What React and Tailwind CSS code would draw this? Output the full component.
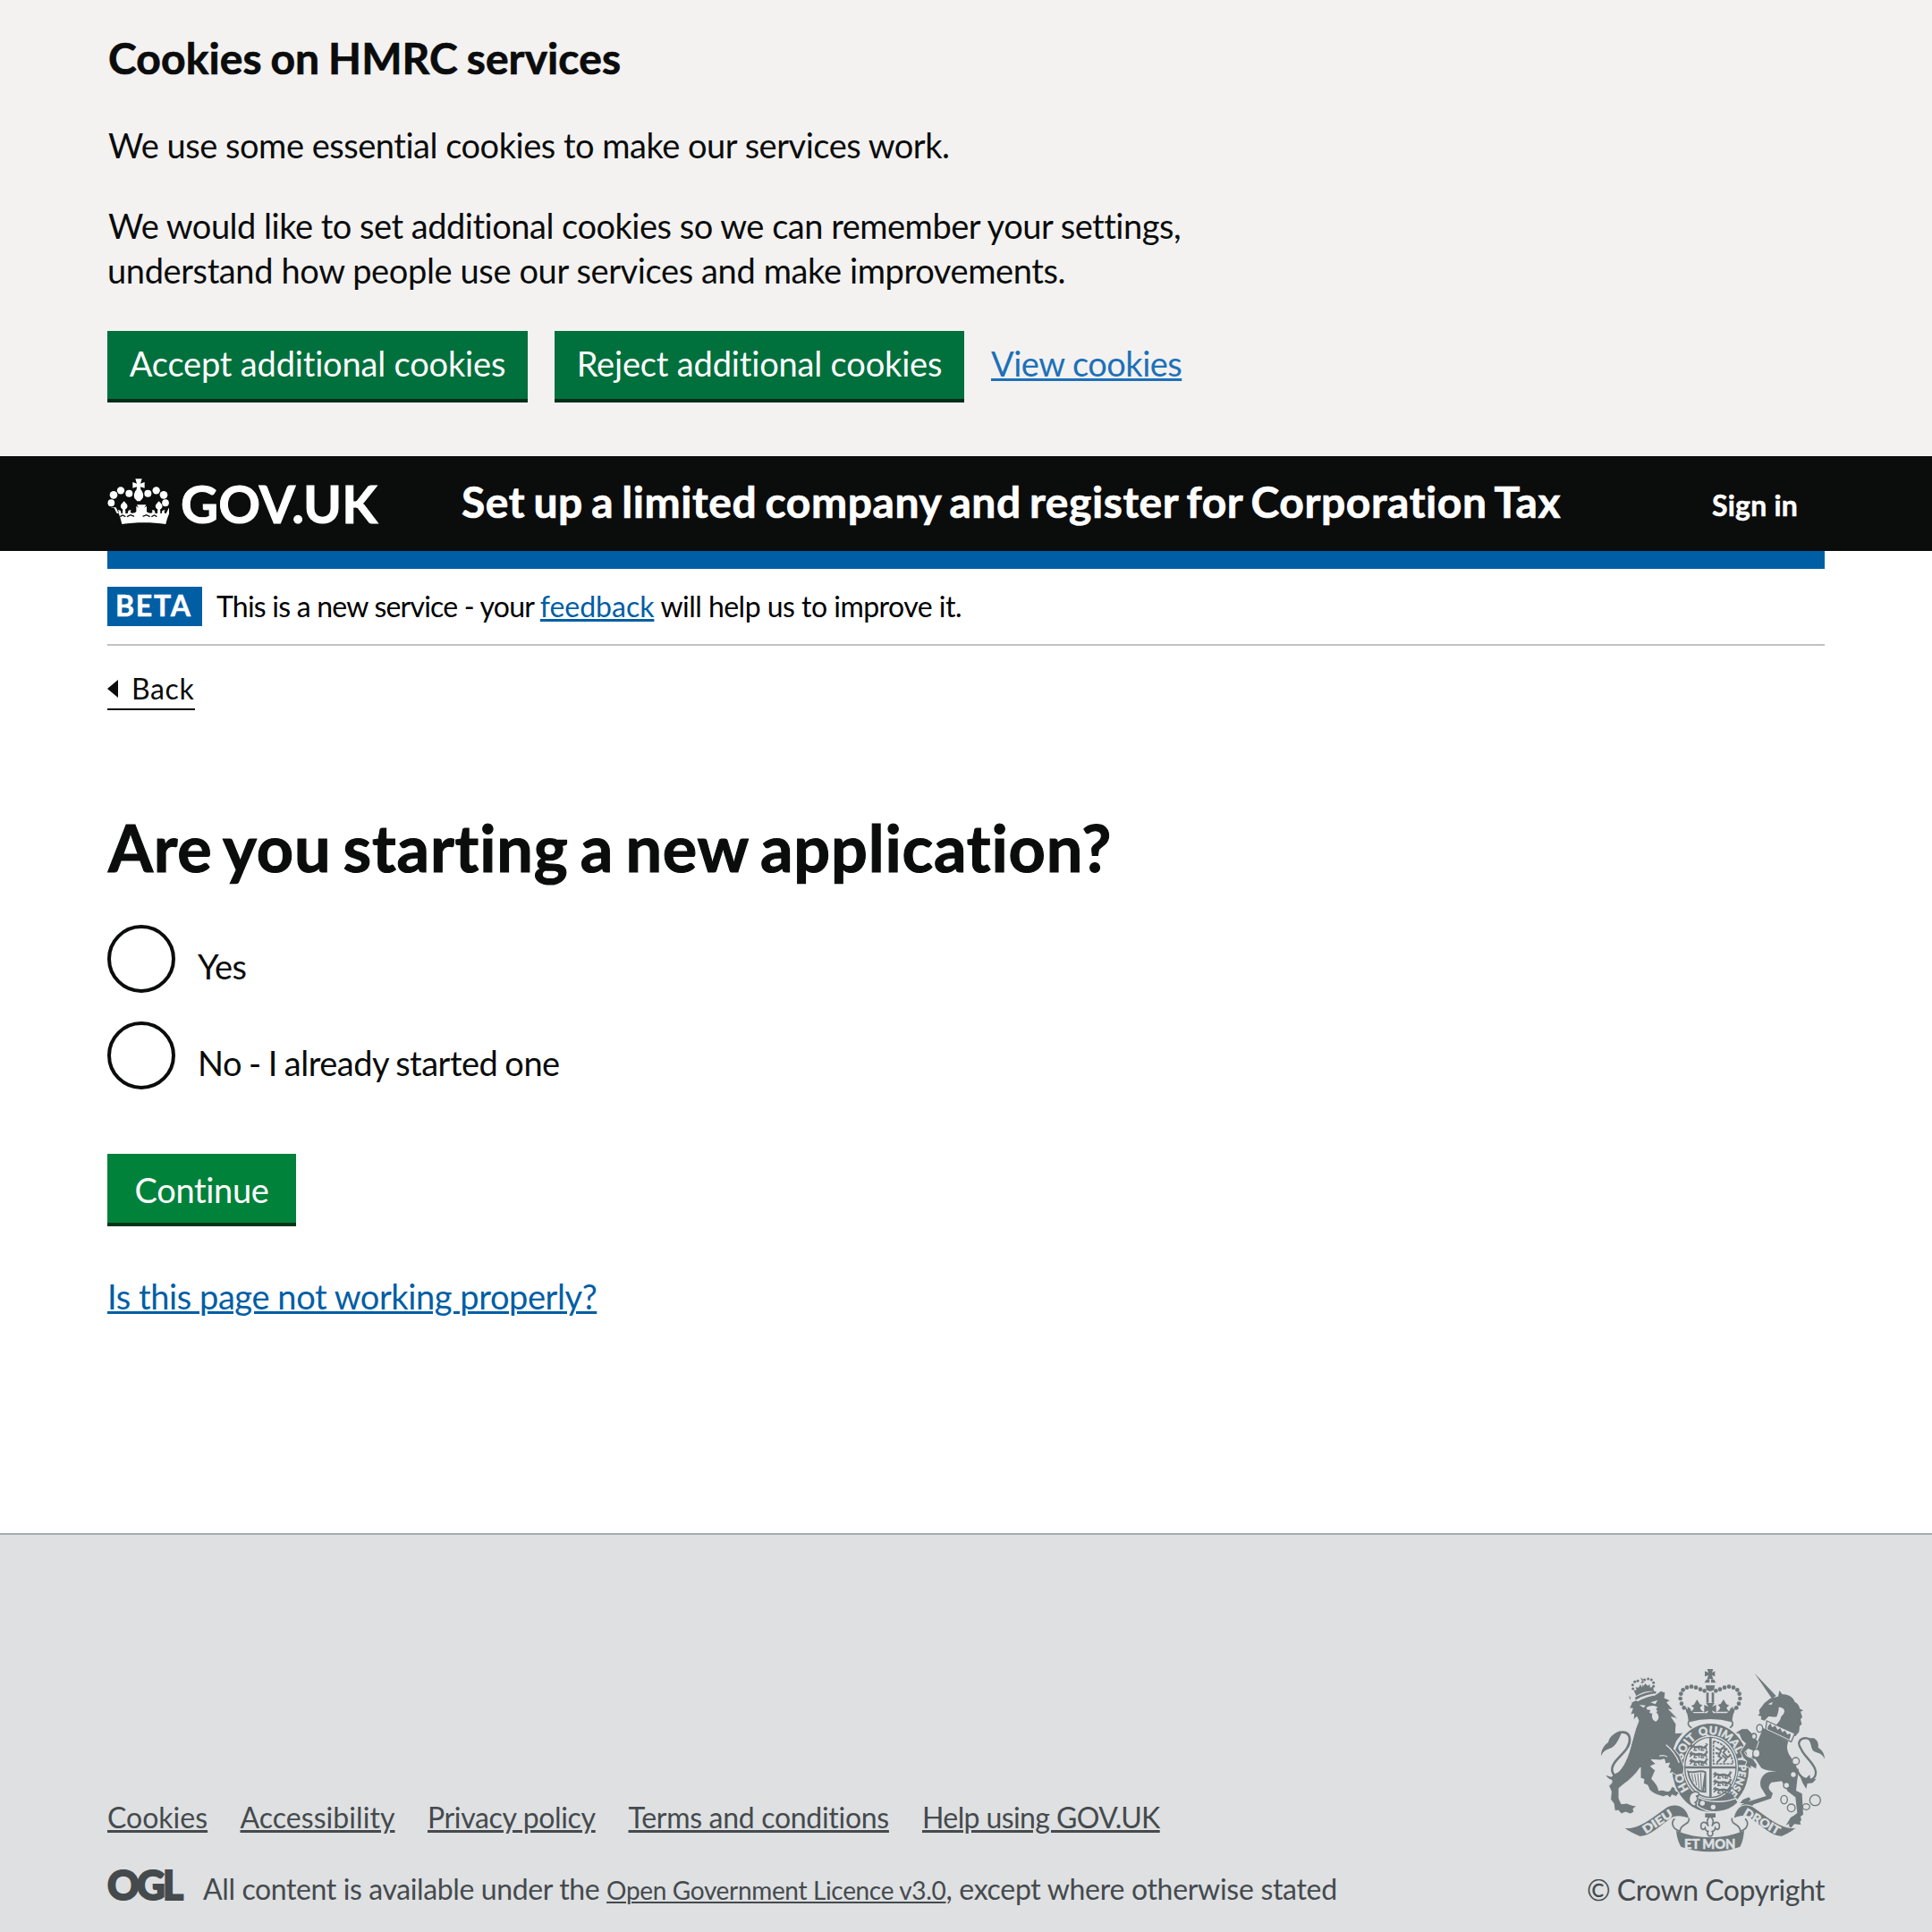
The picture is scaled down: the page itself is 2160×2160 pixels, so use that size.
import React from "react";

function HeaderCrown() {
  return (
    <svg viewBox="12 15 207 156" className="block h-[52px] w-[69px] shrink-0" fill="#fff" aria-hidden="true">
      <ellipse cx="25" cy="97" rx="11.5" ry="12" />
      <circle cx="33" cy="70" r="13" />
      <circle cx="57" cy="55" r="12.5" />
      <circle cx="85" cy="65" r="12" />
      <circle cx="148" cy="65" r="12" />
      <circle cx="176" cy="55" r="12.5" />
      <circle cx="201" cy="70" r="13" />
      <ellipse cx="207" cy="97" rx="11.5" ry="12" />
      <path d="M106 16h22l-5 16 14-5v20l-14-4 1 9c11 12 11 29 2 34l-4 5h-10l-4-5c-9-5-9-22 2-34l1-9-14 4v-20l14 5z" />
      <path d="M23 112l12 2 9 18c8 0 7-7 3-11 8-2 12 4 11 10l5 2c0-5 0-10 1-14-8-6-10-12-4-19l8-9 8 9c6 7 4 13-4 19 1 4 1 9 1 14l8-2c-1-8 4-13 11-9-4 4-3 9 3 9 8 0 10-2 14-5v-19l8 6-6-10h31l-6 10 8-6v19c4 3 6 5 14 5 6 0 7-5 3-9 7-4 12 1 11 9l8 2c0-5 0-10 1-14-8-6-10-12-4-19l8-9 8 9c6 7 4 13-4 19 1 4 1 9 1 14l5-2c-1-6 3-12 11-10-4 4-5 11 3 11l9-18 12-2c-12 20-18 38-22 56-46-7-101-7-147 0-4-18-10-36-20-56z" />
      <path d="M55 143l8-5 10 5M78 143l12-6 12 5M160 143l10-5 8 5M131 142l12-5 12 6" fill="none" stroke="#0b0c0c" strokeWidth="4" />
    </svg>
  );
}

const FILL = "#6f787b";
const PAPER = "#dee0e2";

const leftArch = [
  [352, 189], [338, 178], [330, 164], [326, 147], [328, 131], [335, 118], [348, 110], [363, 107], [378, 110], [393, 116], [407, 121],
];

const lionCrownPearls = [
  [167, 114], [166, 101], [173, 91], [183, 88], [206, 84], [218, 81], [229, 84], [236, 94], [236, 106],
];

function QuarterLions({ x, y }) {
  return (
    <g transform={`translate(${x} ${y})`} fill="none" stroke={FILL} strokeLinecap="round" strokeLinejoin="round">
      {[0, 25, 50].map((dy) => (
        <g key={dy} transform={`translate(0 ${dy})`}>
          <path strokeWidth="8" d="M8 8c5-5 9 2 15 2s13-4 20 0 11 1 13-3" />
          <path strokeWidth="4.5" d="M11 10l-7 6M20 12l-3 8h8M31 11l4 8M44 11l-3 9h8M54 10l5 8M3 7l5-6M56 7l6-6-5-2" />
        </g>
      ))}
    </g>
  );
}

function RoyalArms() {
  return (
    <svg viewBox="60 45 750 618" className="block h-[206px] w-[250px]" fill={FILL} aria-hidden="true">
      <defs>
        <path id="garter" d="M427 489A95 111 0 0 1 427 267A95 111 0 0 1 427 489" />
      </defs>

      {/* central crown */}
      {leftArch.map(([x, y]) => (
        <circle key={`l${x}`} cx={x} cy={y} r="7" />
      ))}
      {leftArch.map(([x, y]) => (
        <circle key={`r${x}`} cx={852 - x} cy={y} r="7" />
      ))}
      <path d="M416 48h20l-4 12 10-5v18l-10-4 4 12h-20l4-12-12 4V55l12 5zM424 80h5v14h16l-6-11-10-2h-6l-10 2-6 11h17zM411 103h31l-3 13c-7 8-19 8-26 0z" />
      <path d="M413 127h8v34h-8zM431 127h8v34h-8z" />
      <path d="M412 162h29l-9 13 14-7v26l-14-7 6 14h-24l6-14-14 7v-26l14 7z" />
      <path d="M382 150l9 16 9 3-8 9c2 8 7 11 13 14h-47c7-2 12-6 13-14l-9-7 10-4zM471 150l9 16 10 4-9 7c1 8 6 12 13 14h-47c6-3 11-6 13-14l-8-9 9-3zM338 170l13 14-1-10 9 6 4 10 9 6h109l9-6 4-10 9-6-1 10 13-14c-6 14-14 30-15 52-46-11-100-11-147 0-1-22-9-38-15-52z" />
      <path d="M355 223c45-12 99-12 144 0 5 8 2 16-7 22M355 223c-6 8-3 16 9 22" fill="none" stroke={FILL} strokeWidth="5" />

      {/* garter */}
      <path fillRule="evenodd" d="M427 231A128 147 0 0 1 427 527A128 147 0 0 1 427 231M427 271A92 107 0 0 0 427 485A92 107 0 0 0 427 271" />
      <ellipse cx="427" cy="378" rx="86" ry="101" fill="none" stroke={FILL} strokeWidth="4" />
      <path d="M341 374h172v8H341zM423 277h8v202h-8z" />
      <g fill={PAPER} stroke={PAPER} strokeWidth="1.2" fontFamily="Lato" fontWeight="900" fontSize="38" textAnchor="middle">
        <text><textPath href="#garter" startOffset="17.5%">HO</textPath></text>
        <text><textPath href="#garter" startOffset="35.5%">SOIT</textPath></text>
        <text><textPath href="#garter" startOffset="49.8%">QUI</textPath></text>
        <text><textPath href="#garter" startOffset="61.5%">MAL</textPath></text>
        <text><textPath href="#garter" startOffset="70.8%">Y</textPath></text>
        <text fontSize="34"><textPath href="#garter" startOffset="81.5%" textLength="104" lengthAdjust="spacingAndGlyphs">PENSE</textPath></text>
      </g>

      {/* shield quarters */}
      <QuarterLions x={355} y={300} />
      <QuarterLions x={435} y={394} />
      <path d="M437 290c30 4 60 34 66 76h-66z" fill="none" stroke={FILL} strokeWidth="5" strokeDasharray="9 3" />
      <path d="M446 312l14 8 8-8 10 6-8 10 14 16 10-6M462 324l-8 16 10 6-14 14M468 338l12 12-8 10M446 330l10 2" fill="none" stroke={FILL} strokeWidth="6" strokeLinecap="round" />
      <path d="M352 392c20 8 38-8 58 2v66c-26 2-52-30-58-68zM410 396l-8 60" fill="none" stroke={FILL} strokeWidth="6" />
      <path d="M364 400l6 26M374 400l6 38M384 398l5 50M394 396l3 58" fill="none" stroke={FILL} strokeWidth="3" />

      {/* garter buckle */}
      <path d="M386 478c34 18 86 20 126 4l8 14c-36 36-96 42-138 10z" stroke={PAPER} strokeWidth="4" />
      <circle cx="400" cy="498" r="8" fill={PAPER} />
      <circle cx="436" cy="511" r="8" fill={PAPER} />
      <path d="M386 462c-12-6-26 0-30 14-4 16 4 30 16 32 8 0 10-8 4-12 10-6 10-20 2-22 10 0 14-6 8-12z" fill={PAPER} stroke={FILL} strokeWidth="5" />

      {/* lion */}
      <path d="M176 152c22-14 46-20 68-22l1-7c-22 0-50 8-71 20z" />
      {lionCrownPearls.map(([x, y]) => (
        <circle key={`${x}-${y}`} cx={x} cy={y} r="4.5" />
      ))}
      <path d="M192 76l4 7 7-2-3 8 7 3-8 2 3 12 6-10 8 8 8-4 0 10 10-3 4 16c-22-2-42 4-60 15l-8-18 9-2-3-9 10 1 6-10 6 10 2-14-8-2 6-5-4-8 6 1z" />
      <path
        d="M161 160l16-8 6 3c18-10 42-18 58-20l20-14 15 6-3 18 20 8-12 7 22 26-16-3 31 32-22-6 16 24-2 30 26-2-22 28-10 26 20 24 14 38-2 22-24 5-12-9-12 3 6-15-10-6 6-14-14 3-4-16-14 4-30-2 16 14-18 8 16 14-12 28c10 12 20 20 24 40 14-8 24 6 36 0l8-14 10 4 2 10 12 6-10 14-14-6-6 10-10-8-14 4c-20-6-34-10-46-24l-6-14-14-6 2-14-12-4 0-36c-16 24-38 44-58 58l-14 12 0 34 8 18 18-2 16 6 18 4-12 8 2 12-12 6-16-6-14 6-10-12-12 2-4-26-10-12 2-28-8-18 10-10 0-20c30-16 48-50 60-90l20-72 10-26-6-14-12 12 2-22-12 4 8-22-12 0 8-16-2-22-10-6z"
        stroke={PAPER}
        strokeWidth="3"
      />
      <path d="M188 168l22 2-8 8zM226 160l24-8-8 14zM212 178c10-8 26-10 38-2l-6 6 6 8-6 2c12 10 12 26 0 32-10-2-16-14-12-26l-10-4 4-8-12-2z" fill={PAPER} />
      <path d="M278 302c20 16 34 34 44 60M256 340c8-4 18-2 26 2" fill="none" stroke={PAPER} strokeWidth="4" />
      <path d="M100 276c18-22 52-22 56 4 4 36-36 58-52 84-14 22-6 40 14 48" fill="none" stroke={FILL} strokeWidth="8" />
      <path d="M60 340c0-22 10-36 24-46 4-16 16-30 36-32l10-2c-10 18-16 46-44 56-10 2-20 10-26 24zM76 404l18 6 12-10 16-8-6 14 12-2-12 18-16 10 6-10c-14-2-24-8-30-18z" />

      {/* unicorn */}
      <path d="M575 62l72 76-14 9z" />
      <path d="M590 186l18-24 20-16 26-6 4-20 10 13c18-2 38 10 42 26 10 4 16 14 16 22l12 6-9 4 6 18-6 8 4 16-7 6-2 20-12 14-18-6-60-22c18-12 30-26 30-42-16 10-32 4-42 4l-14 14-12-4 2-10-12-4 6-6z" />
      <path d="M620 166l16-8-4 10zM656 176c14 0 22 8 18 18-6 14-20 20-30 24 8-16 12-28 12-42z" fill={PAPER} />
      <path d="M616 222l94 42-12 28-86-40z" fill={PAPER} stroke={FILL} strokeWidth="4" />
      <path d="M620 240l8-10 6 14 10-6 8 14 9-6 7 14 9-6 8 14 9-4 2 6-4 14-74-34z" />
      <path d="M604 246l84 44c-8 20-4 38 10 56 20 26 26 48 20 74l-4 36 20 10 4 70-14 10 6 24-22-2-14 16-4-14 14-26 14-14-6-52-26-20-20-34-34 4c-14 12-12 26 4 36l-6 18-58 20-10 10-26 12-14-4 8-16 14-8 70-22-18-30c-6-20 4-44 26-50l28-4c-20 0-36-2-52-10l-22-32-20 22-4-12 16-18 4-20c12-4 16-20 14-32z" />
      <path
        d="M519 256l14-8 18 0 14 14 10 16 14 14-12 34-24-10-12 12 8 12 20 8 14 20-2 16-18-10 2 10-22-12 6-14-12-12-10-20 18-28-14-12-8-20-12-2z"
        stroke={PAPER}
        strokeWidth="3"
      />
      <path d="M680 572l16-26 20-12 12 4 4 18-16 8-20 0zM526 498l10-12 20-8 6 8-14 12z" />
      <path d="M730 314c-14-20-2-36 20-34 20 4 16 20 26 32M730 314c8 26 48 50 50 78 2 20-14 34-36 24-16-6-24-16-26-34" fill="none" stroke={FILL} strokeWidth="7" />
      <path d="M752 280l22 0c14 8 16 20 14 32 12 6 22 20 22 38-10-22-24-20-36-26-12-8-6-28-22-44zM720 390l24 28 16-16 2 16 20-2-12 14-18 2-4 18-12-20z" />
      <g fill={PAPER} stroke={FILL} strokeWidth="4">
        <ellipse cx="592" cy="247" rx="10" ry="13" />
        <ellipse cx="573" cy="274" rx="8" ry="10" />
        <ellipse cx="581" cy="331" rx="12" ry="14" />
        <circle cx="713" cy="357" r="12" />
        <circle cx="705" cy="402" r="10" />
        <circle cx="682" cy="438" r="10" />
        <ellipse cx="674" cy="486" rx="11" ry="14" />
        <circle cx="698" cy="514" r="13" />
        <ellipse cx="748" cy="510" rx="12" ry="10" />
        <circle cx="778" cy="488" r="18" />
      </g>

      {/* ribbon */}
      <path d="M136 580c50 8 100-38 146-70 32-16 66 0 74 40-24-8-46-12-62 0-40 28-70 60-104 60-18-8-38-16-54-30z" stroke={PAPER} strokeWidth="3" />
      <path d="M716 580c-50 8-100-38-146-70-32-16-58 0-66 40 20-10 42-12 58 0 40 28 70 60 104 60 18-8 34-16 50-30z" stroke={PAPER} strokeWidth="3" />
      <path d="M355 548c4 24-30 18-30 44-26-6-32-30-18-42M499 548c-4 24 28 18 28 44 26-6 30-30 16-42" fill="none" stroke={FILL} strokeWidth="5" />
      <path d="M312 590c74 30 154 30 228 0-2 22-6 40-14 54-60 22-138 22-198 0-8-14-14-32-16-54z" />
      <g fill={PAPER} stroke={PAPER} strokeWidth="1.2" fontFamily="Lato" fontWeight="900" textAnchor="middle">
        <text fontSize="44" x="425" y="651" textLength="172" lengthAdjust="spacingAndGlyphs">ET MON</text>
        <text fontSize="39" textLength="112" lengthAdjust="spacingAndGlyphs" transform="translate(257 571) rotate(-33)">DIEU</text>
        <text fontSize="39" textLength="134" lengthAdjust="spacingAndGlyphs" transform="translate(593 571) rotate(30)">DROIT</text>
      </g>

      {/* fleur-de-lis */}
      <path d="M409 532h35v14h-35z" />
      <path d="M426 541c-12 12-12 20-6 34-8-18-26-16-25 0 0 12 10 14 14 6 2 12 8 12 12 10-8 8-2 18 5 18s13-10 5-18c4 2 10 2 12-10 4 8 14 6 14-6 1-16-17-18-25 0 6-14 6-22-6-34z" fill={PAPER} stroke={FILL} strokeWidth="5" />
    </svg>
  );
}

function Radio({ label, tracking }) {
  return (
    <label className="flex h-[76px]">
      <span className="size-[76px] shrink-0 rounded-full border-4 border-[#0b0c0c]" />
      <span className={`ml-[25px] pt-[21px] text-[38px] leading-[50px] ${tracking}`}>{label}</span>
    </label>
  );
}

const footerLinks = [
  { text: "Cookies", cls: "w-[112px] tracking-[0px]" },
  { text: "Accessibility", cls: "w-[173px] tracking-[0.05px]" },
  { text: "Privacy policy", cls: "w-[188px] tracking-[-0.35px]" },
  { text: "Terms and conditions", cls: "w-[292px] tracking-[-0.3px]" },
  { text: "Help using GOV.UK", cls: "w-[266px] tracking-[-0.6px]" },
];

export default function App() {
  return (
    <div className="flex h-[2160px] w-[2160px] flex-col overflow-hidden bg-white font-['Lato',sans-serif] text-[#0b0c0c] [font-variant-ligatures:none]">
      <section className="h-[510px] bg-[#f3f2f1] px-[120px] pt-[35px]">
        <h2 className="pl-px text-[48px] leading-[60px] font-bold tracking-[0.1px] [word-spacing:-2px] [-webkit-text-stroke:0.7px]">Cookies on HMRC services</h2>
        <p className="mt-[42px] pl-px text-[38px] leading-[50px] tracking-[-0.48px]">We use some essential cookies to make our services work.</p>
        <p className="mt-[40px] text-[38px] leading-[50px] whitespace-nowrap">
          <span className="pl-px tracking-[-0.49px]">We would like to set additional cookies so we can remember your settings,</span>
          <br />
          <span className="tracking-[-0.38px]">understand how people use our services and make improvements.</span>
        </p>
        <div className="mt-[43px] flex text-[38px] leading-[50px]">
          <button className="h-[80px] w-[470px] border-b-4 border-[#002d18] bg-[#00703c] pb-[4px] tracking-[-0.17px] whitespace-nowrap text-white">Accept additional cookies</button>
          <button className="ml-[30px] h-[80px] w-[458px] border-b-4 border-[#002d18] bg-[#00703c] pb-[4px] tracking-[-0.17px] whitespace-nowrap text-white">Reject additional cookies</button>
          <a className="ml-[30px] pt-[11px] tracking-[-0.51px] text-[#1d70b8] underline decoration-[3px] underline-offset-[2px]">View cookies</a>
        </div>
      </section>

      <header className="h-[106px] bg-[#0b0c0c] px-[120px] text-white">
        <div className="flex h-full items-start">
          <div className="pt-[25px]"><HeaderCrown /></div>
          <span className="ml-[13px] w-[314px] pt-[23px] text-[58px] leading-[60px] font-bold tracking-[0.1px] [-webkit-text-stroke:1px]">GOV.UK</span>
          <span className="pt-[21px] text-[48px] leading-[60px] font-bold tracking-[0.57px] whitespace-nowrap [word-spacing:-3px] [-webkit-text-stroke:0.7px]">Set up a limited company and register for Corporation Tax</span>
          <span className="mr-[30px] ml-auto pt-[34px] text-[32px] leading-[41px] font-bold tracking-[0.2px] [-webkit-text-stroke:0.5px]">Sign in</span>
        </div>
      </header>

      <main className="mx-[120px] border-t-20 border-[#005ea5]">
        <div className="flex h-[86px] items-start border-b-2 border-[#bfc1c3] pt-[20px] text-[32px] text-black">
          <strong className="h-[44px] w-[106px] bg-[#005ea5] pl-[9px] text-[32px] leading-[42px] font-bold tracking-[1.8px] text-white [-webkit-text-stroke:0.5px]">BETA</strong>
          <p className="ml-[16px] leading-[43px] whitespace-nowrap">
            <span className="tracking-[-0.78px]">This is a new service - your </span>
            <a className="tracking-[-0.03px] text-[#005ea5] underline decoration-[3px] underline-offset-[2px]">feedback</a>
            <span className="tracking-[-0.52px]"> will help us to improve it.</span>
          </p>
        </div>

        <a className="mt-[26px] flex h-[46px] w-[98px] items-start border-b-2 border-[#0b0c0c]">
          <svg viewBox="0 0 12 20" className="mt-[12px] h-5 w-3 shrink-0"><path d="M0 10L12 0V20Z" fill="#0b0c0c" /></svg>
          <span className="ml-[15px] text-[32px] leading-[44px] tracking-[0.6px]">Back</span>
        </a>

        <h1 className="mt-[113px] pl-px text-[72px] leading-[80px] font-bold tracking-[0.8px] whitespace-nowrap [word-spacing:-5px] [-webkit-text-stroke:1.1px]">Are you starting a new application?</h1>

        <div className="mt-[47px] flex flex-col gap-8">
          <Radio label="Yes" tracking="tracking-[-0.6px]" />
          <Radio label="No - I already started one" tracking="tracking-[-0.5px] [word-spacing:-1.2px]" />
        </div>

        <button className="mt-[72px] block h-[81px] w-[211px] border-b-4 border-[#003618] bg-[#00823b] pt-[3px] text-[38px] leading-[50px] tracking-[-0.35px] text-white">Continue</button>
        <p className="mt-[53px] text-[38px] leading-[50px]">
          <a className="tracking-[-0.42px] text-[#005ea5] underline decoration-[3px] underline-offset-[2px]">Is this page not working properly?</a>
        </p>
      </main>

      <footer className="mt-auto flex h-[446px] items-start justify-between border-t-2 border-[#a1acb2] bg-[#dee0e2] px-[120px] text-[32px] leading-[40px] text-[#454a4d]">
        <div className="pt-[296px]">
          <nav className="flex gap-[36.5px]">
            {footerLinks.map((l) => (
              <a key={l.text} className={`whitespace-nowrap underline decoration-[3px] underline-offset-[2px] ${l.cls}`}>{l.text}</a>
            ))}
          </nav>
          <div className="mt-[38px] flex items-start whitespace-nowrap">
            <svg viewBox="0 0 86 34" className="mt-[1px] h-[34px] w-[86px] overflow-visible" fill="#454a4d" stroke="#454a4d" strokeWidth="2" fontFamily="Lato" fontWeight="900" fontSize="45">
              <text x="0" y="33" textLength="82" lengthAdjust="spacingAndGlyphs" letterSpacing="-3">OGL</text>
            </svg>
            <p className="ml-[21px] pt-[2px]">
              <span className="tracking-[-0.38px]">All content is available under the </span>
              <a className="text-[28px] tracking-[-0.34px] underline decoration-2 underline-offset-[2px]">Open Government Licence v3.0</a>
              <span className="tracking-[-0.3px]">, except where otherwise stated</span>
            </p>
          </div>
        </div>
        <div className="flex flex-col items-end pt-[149px]">
          <RoyalArms />
          <p className="mt-[22px] tracking-[-0.5px] whitespace-nowrap">© Crown Copyright</p>
        </div>
      </footer>
    </div>
  );
}
